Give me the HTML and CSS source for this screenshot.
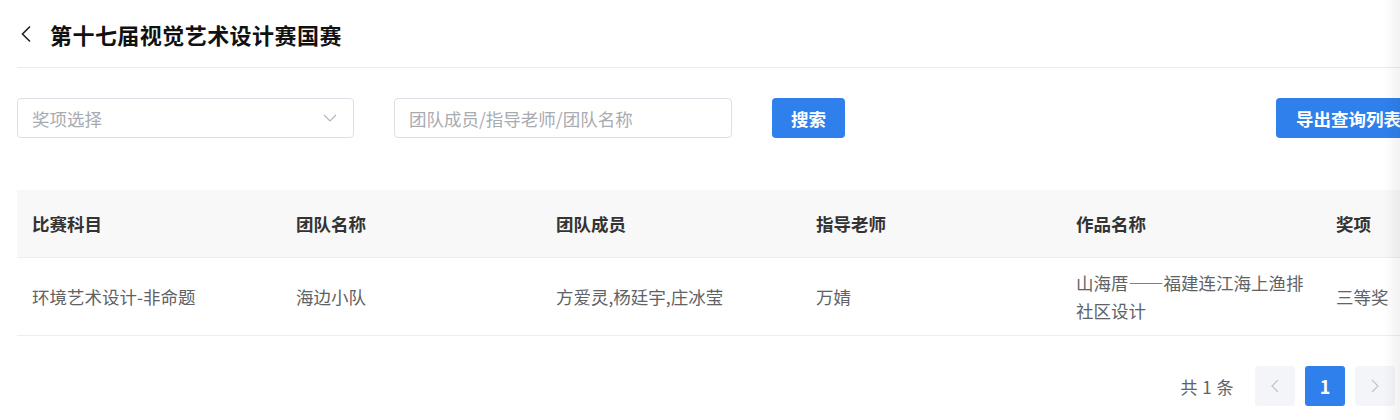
FILE: index.html
```html
<!DOCTYPE html>
<html lang="zh-CN">
<head>
<meta charset="utf-8">
<title>第十七届视觉艺术设计赛国赛</title>
<link rel="stylesheet" href="styles.css">
</head>
<body>
<div class="page">
  <header class="page-header">
    <button class="back" type="button" aria-label="返回">
      <svg width="12" height="18" viewBox="0 0 12 18"><path d="M10 1.5 L2.5 9 L10 16.5" fill="none" stroke="#222" stroke-width="1.6"/></svg>
    </button>
    <h1 class="title">第十七届视觉艺术设计赛国赛</h1>
  </header>

  <div class="toolbar">
    <div class="select">
      <span class="placeholder">奖项选择</span>
      <svg class="caret" width="14" height="8" viewBox="0 0 14 8"><path d="M1 1 L7 7 L13 1" fill="none" stroke="#b4b7be" stroke-width="1.2"/></svg>
    </div>
    <div class="input">
      <span class="placeholder">团队成员/指导老师/团队名称</span>
    </div>
    <button class="btn" type="button">搜索</button>
    <button class="btn btn-export" type="button">导出查询列表</button>
  </div>

  <table class="grid">
    <colgroup>
      <col class="c-first"><col class="c-col"><col class="c-col"><col class="c-col"><col class="c-col"><col class="c-col">
    </colgroup>
    <thead>
      <tr>
        <th>比赛科目</th>
        <th>团队名称</th>
        <th>团队成员</th>
        <th>指导老师</th>
        <th>作品名称</th>
        <th>奖项</th>
      </tr>
    </thead>
    <tbody>
      <tr>
        <td>环境艺术设计-非命题</td>
        <td>海边小队</td>
        <td>方爱灵,杨廷宇,庄冰莹</td>
        <td>万婧</td>
        <td>山海厝——福建连江海上渔排社区设计</td>
        <td>三等奖</td>
      </tr>
    </tbody>
  </table>

  <div class="pager">
    <span class="total">共 1 条</span>
    <button class="pg pg-nav" type="button" aria-label="上一页">
      <svg width="8" height="14" viewBox="0 0 8 14"><path d="M7 1 L1 7 L7 13" fill="none" stroke="#c0c4cc" stroke-width="1.2"/></svg>
    </button>
    <button class="pg pg-active" type="button">1</button>
    <button class="pg pg-nav" type="button" aria-label="下一页">
      <svg width="8" height="14" viewBox="0 0 8 14"><path d="M1 1 L7 7 L1 13" fill="none" stroke="#c0c4cc" stroke-width="1.2"/></svg>
    </button>
  </div>
</div>
<div class="edge-shadow"></div>
</body>
</html>
```

FILE: styles.css
```css
html, body {
  margin: 0;
  padding: 0;
  background: #fff;
  overflow: hidden;
}

body {
  font-family: "Noto Sans CJK SC", "Noto Sans", sans-serif;
  color: #606266;
}

.page {
  padding-left: 17px;
  width: 1600px;
}

/* header */
.page-header {
  display: flex;
  align-items: center;
  height: 67px;
  border-bottom: 1px solid #ebebeb;
  width: 1383px;
}

.back {
  display: flex;
  align-items: center;
  border: 0;
  background: none;
  padding: 0;
  margin: 0 0 0 3px;
  width: 30px;
  height: 20px;
}

.title {
  margin: 0;
  font-size: 22px;
  line-height: 30px;
  font-weight: 700;
  color: #111;
  letter-spacing: 0.45px;
}

/* filters */
.toolbar {
  display: flex;
  align-items: center;
  margin-top: 30px;
  width: 1404px;
  gap: 40px;
}

.select, .input {
  box-sizing: border-box;
  height: 40px;
  border: 1px solid #dcdfe6;
  border-radius: 4px;
  display: flex;
  align-items: center;
  padding: 0 15px 0 14px;
  font-size: 17.5px;
}

.select {
  width: 337px;
  justify-content: space-between;
}

.input {
  width: 338px;
}

.placeholder {
  color: #a8abb2;
}

.caret {
  margin-right: 1px;
}

.btn {
  height: 40px;
  border: 0;
  border-radius: 4px;
  background: #2f80ed;
  color: #fff;
  font-family: inherit;
  font-size: 17.5px;
  font-weight: 700;
  padding: 0 19px;
  flex: none;
}

.btn-export {
  margin-left: auto;
  padding: 0 20px;
}

/* table */
.grid {
  margin-top: 52px;
  border-collapse: collapse;
  table-layout: fixed;
  width: 1564px;
  font-size: 17.5px;
}

.c-first { width: 264px; }
.c-col { width: 260px; }

.grid th,
.grid td {
  text-align: left;
  padding: 0 15px;
  line-height: 28px;
  border-bottom: 1px solid #ebeef5;
  vertical-align: middle;
}

.grid th {
  height: 67px;
  background: #f8f8f8;
  color: #333;
  font-weight: 700;
}

.grid td {
  height: 77px;
  color: #606266;
}

/* pagination */
.pager {
  display: flex;
  align-items: center;
  justify-content: flex-end;
  width: 1378px;
  margin-top: 30px;
  gap: 10px;
}

.total {
  font-size: 17px;
  color: #606266;
  margin-right: 11px;
  letter-spacing: 0.5px;
}

.pg {
  width: 40px;
  height: 40px;
  border: 0;
  border-radius: 3px;
  background: #f4f5f8;
  display: flex;
  align-items: center;
  justify-content: center;
  padding: 0;
}

.pg-active {
  background: #2f80ed;
  color: #fff;
  font-family: inherit;
  font-size: 18px;
  font-weight: 700;
}

/* soft shade at the right edge of the viewport */
.edge-shadow {
  position: fixed;
  top: 0;
  right: 0;
  width: 16px;
  height: 100%;
  background: linear-gradient(to right, rgba(0,0,0,0), rgba(0,0,0,0.05));
  pointer-events: none;
}
```
